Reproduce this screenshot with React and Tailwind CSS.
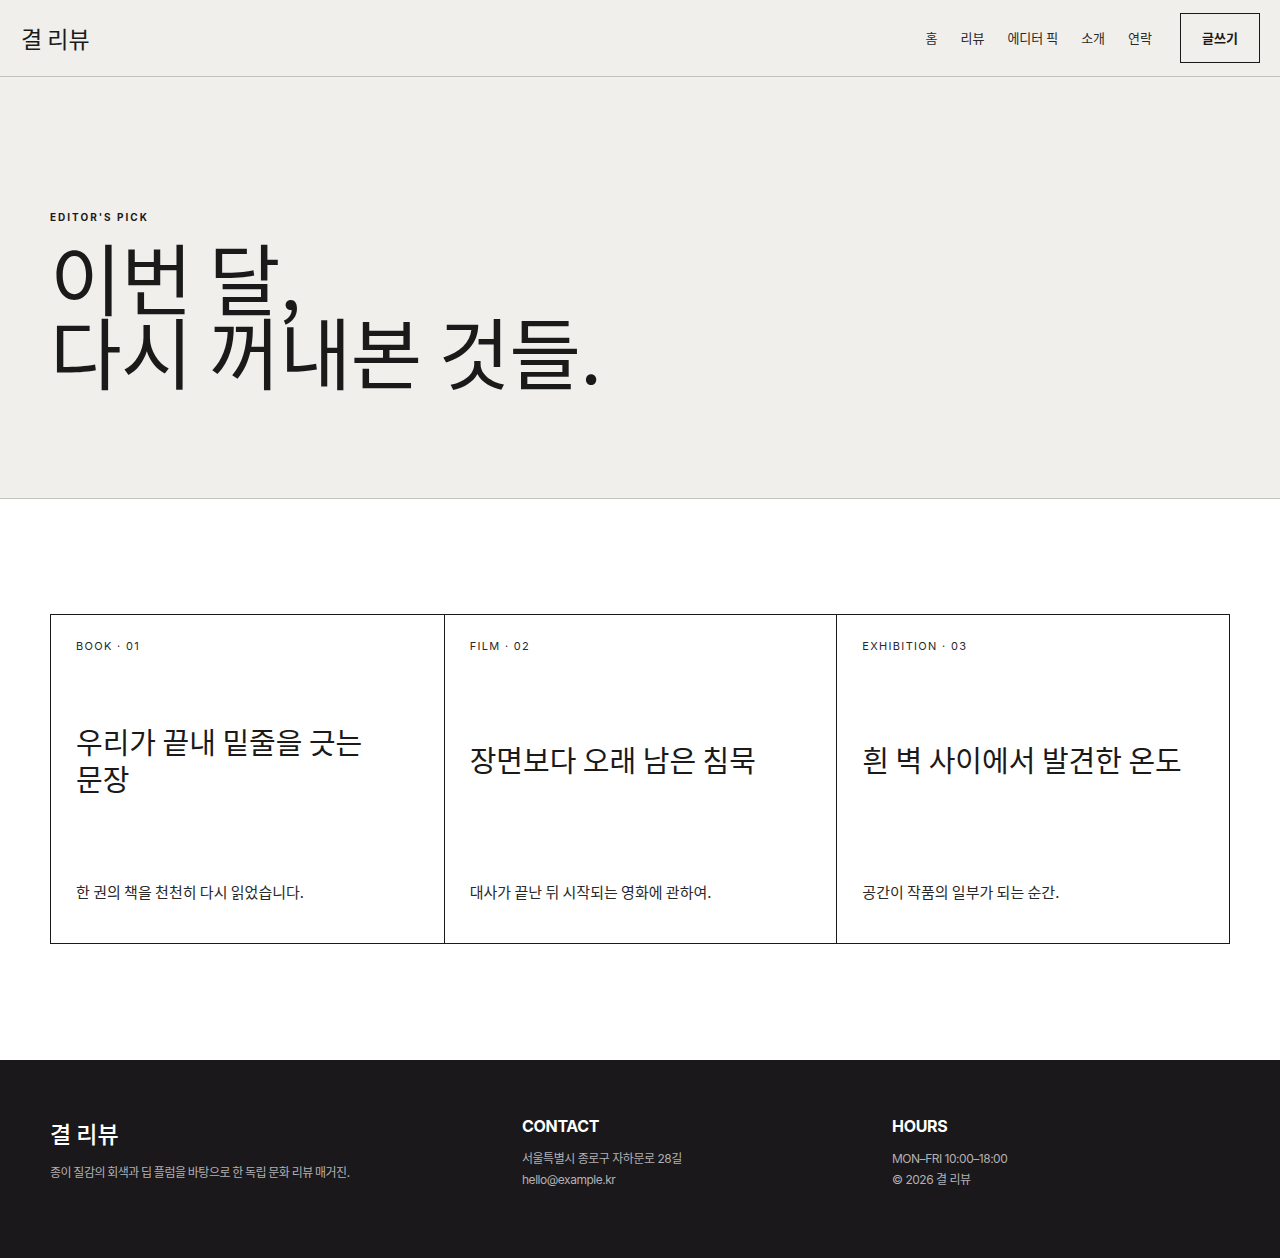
const cards = [
  { label: 'BOOK · 01', title: '우리가 끝내 밑줄을 긋는 문장', desc: '한 권의 책을 천천히 다시 읽었습니다.' },
  { label: 'FILM · 02', title: '장면보다 오래 남은 침묵', desc: '대사가 끝난 뒤 시작되는 영화에 관하여.' },
  { label: 'EXHIBITION · 03', title: '흰 벽 사이에서 발견한 온도', desc: '공간이 작품의 일부가 되는 순간.' },
]

const sans = "font-['Inter','Noto_Sans_CJK_KR',sans-serif]"
const kr = "font-['Noto_Sans_CJK_KR',sans-serif]"
const foot = "font-['Inter','Noto_Sans_CJK_KR',sans-serif]"

function Header() {
  return (
    <header className="h-[77px] bg-[#f0efeb] border-b border-[#c4c2bf] flex items-center justify-between px-5">
      <div className={`${kr} text-[23px] text-[#1b1a1a] pl-[1px]`}>결 리뷰</div>
      <nav className="flex items-center">
        <ul className={`${kr} flex items-center gap-[23px] text-[13px] text-[#2a2929]`}>
          <li>홈</li>
          <li>리뷰</li>
          <li>에디터 픽</li>
          <li>소개</li>
          <li>연락</li>
        </ul>
        <button className={`${kr} ml-7 w-[80px] h-[50px] border border-[#1b1a1a] text-[13px] font-bold text-[#1b1a1a]`}>
          글쓰기
        </button>
      </nav>
    </header>
  )
}

function Hero() {
  return (
    <section className="bg-[#f0efeb] border-b border-[#c4c2bf] h-[422px] px-[50px] pt-[133px]">
      <p className={`${sans} text-[10px] font-bold tracking-[0.2em] text-[#1b1a1a]`}>EDITOR'S PICK</p>
      <h1 className={`${kr} mt-[14px] text-[78px] leading-[74px] font-normal text-[#1b1a1a] tracking-[-0.01em]`}>
        이번 달,
        <br />
        다시 꺼내본 것들.
      </h1>
    </section>
  )
}

function Cards() {
  return (
    <section className="bg-white px-[50px] pt-[115px] pb-[116px]">
      <div className="grid grid-cols-3 border border-[#1b1a1a]">
        {cards.map((c, i) => (
          <article
            key={c.label}
            className={`h-[328px] flex flex-col justify-between pt-[23px] pb-[40px] px-[25px] ${i > 0 ? 'border-l border-[#1b1a1a]' : ''}`}
          >
            <p className={`${sans} text-[11px] tracking-[0.12em] text-[#2a2929]`}>{c.label}</p>
            <h2 className={`${kr} mb-[16px] text-[29px] leading-[37px] text-[#1b1a1a] break-keep`}>{c.title}</h2>
            <p className={`${kr} text-[15px] text-[#2a2929]`}>{c.desc}</p>
          </article>
        ))}
      </div>
    </section>
  )
}

function Footer() {
  return (
    <footer className="bg-[#1a181b] h-[198px] px-[50px] pt-[56px]">
      <div className="grid grid-cols-[440px_338px_1fr] gap-8">
        <div>
          <div className={`${kr} text-[23px] font-medium text-white`}>결 리뷰</div>
          <p className={`${kr} mt-[12px] text-[12px] text-[#b3b0b3] tracking-[-0.04em]`}>
            종이 질감의 회색과 딥 플럼을 바탕으로 한 독립 문화 리뷰 매거진.
          </p>
        </div>
        <div>
          <h3 className={`${foot} text-[16px] font-bold text-white tracking-[-0.02em] -mt-[2px]`}>CONTACT</h3>
          <div className={`${foot} mt-[10px] text-[12px] leading-[21px] text-[#b3b0b3] tracking-[-0.04em]`}>
            <p>서울특별시 종로구 자하문로 28길</p>
            <p>hello@example.kr</p>
          </div>
        </div>
        <div>
          <h3 className={`${foot} text-[16px] font-bold text-white tracking-[-0.02em] -mt-[2px]`}>HOURS</h3>
          <div className={`${foot} mt-[10px] text-[12px] leading-[21px] text-[#b3b0b3] tracking-[-0.04em]`}>
            <p>MON–FRI 10:00–18:00</p>
            <p>© 2026 결 리뷰</p>
          </div>
        </div>
      </div>
    </footer>
  )
}

export default function App() {
  return (
    <div className="min-h-screen bg-white">
      <Header />
      <Hero />
      <Cards />
      <Footer />
    </div>
  )
}
